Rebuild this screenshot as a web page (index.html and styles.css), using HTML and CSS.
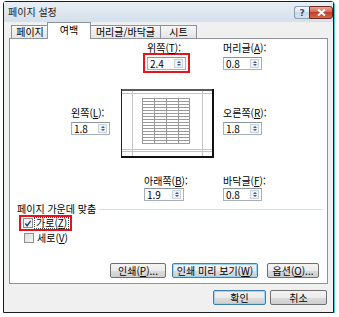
FILE: index.html
```html
<!DOCTYPE html>
<html lang="ko">

<head>
  <meta charset="UTF-8">
  <title>페이지 설정</title>
  <link rel="stylesheet" href="styles.css">
</head>

<body>
  <div class="window">
    <div class="titlebar">
      <span class="title">페이지 설정</span>
      <div class="caption_buttons">
        <span class="cap help">?</span>
        <span class="cap close">
          <svg width="9" height="7" viewBox="0 0 9 7">
            <path d="M1 0.5 L8 6.5 M8 0.5 L1 6.5" stroke="#fff" stroke-width="2" />
          </svg>
        </span>
      </div>
    </div>

    <div class="client">
      <div class="tabs">
        <span class="tab t1">페이지</span>
        <span class="tab t2 active">여백</span>
        <span class="tab t3">머리글/바닥글</span>
        <span class="tab t4">시트</span>
      </div>

      <div class="panel">
        <div class="margins">
          <div class="field f_top">
            <div class="label">위쪽(<u>T</u>):</div>
            <div class="redbox">
              <div class="spin"><span class="val">2.4</span><span class="arrows"><i class="up"></i><i class="down"></i></span></div>
            </div>
          </div>
          <div class="field f_header">
            <div class="label">머리글(<u>A</u>):</div>
            <div class="spin"><span class="val">0.8</span><span class="arrows"><i class="up"></i><i class="down"></i></span></div>
          </div>

          <div class="field f_left">
            <div class="label">왼쪽(<u>L</u>):</div>
            <div class="spin"><span class="val">1.8</span><span class="arrows"><i class="up"></i><i class="down"></i></span></div>
          </div>
          <div class="preview">
            <svg width="93" height="69" viewBox="0 0 93 69">
              <rect x="0" y="0" width="93" height="69" fill="#fff" />
              <g stroke="#c4c4c4" stroke-width="1">
                <line x1="11.5" y1="0" x2="11.5" y2="67" />
                <line x1="81.5" y1="0" x2="81.5" y2="67" />
                <line x1="0" y1="4.5" x2="91" y2="4.5" />
                <line x1="0" y1="60.5" x2="91" y2="60.5" />
                <line x1="0" y1="62.5" x2="91" y2="62.5" />
              </g>
              <g stroke="#9a9a9a" stroke-width="1" fill="none">
                <rect x="21.5" y="9.5" width="47" height="45" />
                <line x1="33.5" y1="9.5" x2="33.5" y2="54.5" />
                <line x1="45.5" y1="9.5" x2="45.5" y2="54.5" />
                <line x1="57.5" y1="9.5" x2="57.5" y2="54.5" />
                <line x1="21.5" y1="12.5" x2="68.5" y2="12.5" />
                <line x1="21.5" y1="15.5" x2="68.5" y2="15.5" />
                <line x1="21.5" y1="18.5" x2="68.5" y2="18.5" />
                <line x1="21.5" y1="21.5" x2="68.5" y2="21.5" />
                <line x1="21.5" y1="24.5" x2="68.5" y2="24.5" />
                <line x1="21.5" y1="27.5" x2="68.5" y2="27.5" />
                <line x1="21.5" y1="30.5" x2="68.5" y2="30.5" />
                <line x1="21.5" y1="33.5" x2="68.5" y2="33.5" />
                <line x1="21.5" y1="36.5" x2="68.5" y2="36.5" />
                <line x1="21.5" y1="39.5" x2="68.5" y2="39.5" />
                <line x1="21.5" y1="42.5" x2="68.5" y2="42.5" />
                <line x1="21.5" y1="45.5" x2="68.5" y2="45.5" />
                <line x1="21.5" y1="48.5" x2="68.5" y2="48.5" />
                <line x1="21.5" y1="51.5" x2="68.5" y2="51.5" />
              </g>
              <rect x="0" y="0" width="93" height="2" fill="#5a5a5a" />
              <rect x="0" y="0" width="1" height="69" fill="#222" />
              <rect x="91" y="0" width="2" height="69" fill="#111" />
              <rect x="0" y="67" width="93" height="2" fill="#111" />
            </svg>
          </div>
          <div class="field f_right">
            <div class="label">오른쪽(<u>R</u>):</div>
            <div class="spin"><span class="val">1.8</span><span class="arrows"><i class="up"></i><i class="down"></i></span></div>
          </div>

          <div class="field f_bottom">
            <div class="label">아래쪽(<u>B</u>):</div>
            <div class="spin"><span class="val">1.9</span><span class="arrows"><i class="up"></i><i class="down"></i></span></div>
          </div>
          <div class="field f_footer">
            <div class="label">바닥글(<u>F</u>):</div>
            <div class="spin"><span class="val">0.8</span><span class="arrows"><i class="up"></i><i class="down"></i></span></div>
          </div>
        </div>

        <div class="group_title">페이지 가운데 맞춤</div>
        <div class="check_row redcheck">
          <span class="checkbox checked">
            <svg width="9" height="9" viewBox="0 0 9 9">
              <path d="M1.5 4.5 L3.5 7 L7.5 1.5" stroke="#1d3f7a" stroke-width="1.6" fill="none" />
            </svg>
          </span>
          <span class="check_label focus">가로(<u>Z</u>)</span>
        </div>
        <div class="check_row plain">
          <span class="checkbox"></span>
          <span class="check_label">세로(<u>V</u>)</span>
        </div>

        <div class="panel_buttons">
          <span class="btn b_print">인쇄(<u>P</u>)...</span>
          <span class="btn b_preview">인쇄 미리 보기(<u>W</u>)</span>
          <span class="btn b_options">옵션(<u>O</u>)...</span>
        </div>
      </div>

      <div class="dialog_buttons">
        <span class="btn default b_ok">확인</span>
        <span class="btn b_cancel">취소</span>
      </div>
    </div>
  </div>
</body>

</html>
```

FILE: styles.css
```css
body {
  margin: 0;
  background-color: #fff;
  font-family: 'Noto Sans CJK KR', 'Liberation Sans', sans-serif;
  font-size: 10px;
  color: #000;
}

u {
  text-decoration: underline;
  text-underline-offset: 1px;
}

.window {
  margin: 1px 0 0 3px;
  width: 331px;
  height: 312px;
  box-sizing: border-box;
  border: 1px solid #1c1c1c;
  border-radius: 3px 3px 0 0;
  background-color: #eef1f4;
  box-shadow: 1px 1px 0 #52c6db;
  display: flex;
  flex-direction: column;
}

.titlebar {
  height: 20px;
  display: flex;
  align-items: center;
  justify-content: space-between;
  background: linear-gradient(#e8eef5, #d5e0eb);
  padding: 0 0 0 4px;
}

.title {
  line-height: 12px;
  color: #1a1a1a;
}

.caption_buttons {
  display: flex;
  align-self: flex-start;
  margin-top: 4px;
}

.cap {
  height: 13px;
  box-sizing: border-box;
  display: flex;
  justify-content: center;
  align-items: center;
}

.help {
  width: 15px;
  border: 1px solid #8a9db3;
  border-right: none;
  border-radius: 3px 0 0 3px;
  background: linear-gradient(#f3f7fb, #dce6f0 50%, #cbd9e6 50%, #d6e3ef);
  color: #3d4f66;
  font-family: 'DejaVu Sans', sans-serif;
  font-size: 9px;
  font-weight: bold;
  line-height: 10px;
}

.close {
  width: 24px;
  border: 1px solid #6e2a20;
  border-radius: 0 3px 3px 0;
  background: linear-gradient(#eaa596, #d2614b 50%, #c0412b 50%, #cf6a4e);
}

.client {
  flex: 1;
  display: flex;
  flex-direction: column;
  background-color: #f0f0f0;
  padding: 0 5px 0 5px;
}

.tabs {
  height: 16px;
  display: flex;
  align-items: flex-end;
  padding-left: 2px;
}

.tab {
  height: 13px;
  box-sizing: border-box;
  border: 1px solid #8d929b;
  border-bottom: none;
  background: linear-gradient(#f6f6f6, #e4e4e4);
  line-height: 11px;
  text-align: center;
  margin-right: -1px;
}

.t1 {
  width: 38px;
}

.t2 {
  width: 44px;
}

.t3 {
  width: 71px;
}

.t4 {
  width: 37px;
}

.tab.active {
  height: 17px;
  margin-bottom: -1px;
  margin-left: -1px;
  margin-right: -1px;
  background: #fff;
  position: relative;
  z-index: 1;
  line-height: 13px;
}

.panel {
  height: 246px;
  box-sizing: border-box;
  border: 1px solid #8d929b;
  background-color: #fff;
  display: flex;
  flex-direction: column;
}

.margins {
  display: grid;
  grid-template-columns: 61px 49px 103px 1fr;
  padding-top: 3px;
}

.label {
  line-height: 12px;
  height: 12px;
  white-space: nowrap;
}

.spin {
  width: 39px;
  height: 13px;
  box-sizing: border-box;
  border: 1px solid #a9b0b8;
  border-top-color: #8c949c;
  background-color: #fff;
  display: flex;
  justify-content: space-between;
  align-items: center;
}

.val {
  padding-left: 2px;
  line-height: 11px;
}

.arrows {
  width: 9px;
  height: 9px;
  margin-right: 2px;
  box-sizing: border-box;
  border: 1px solid #c9d3de;
  background-color: #eef2f7;
  display: flex;
  flex-direction: column;
  justify-content: space-around;
  align-items: center;
}

.arrows i {
  width: 0;
  height: 0;
  border-left: 2px solid transparent;
  border-right: 2px solid transparent;
}

.arrows .up {
  border-bottom: 2px solid #3e5a86;
}

.arrows .down {
  border-top: 2px solid #3e5a86;
}

.f_top {
  grid-column: 3;
  grid-row: 1;
  margin-left: 23px;
}

.f_top .label {
  margin-left: 4px;
}

.redbox {
  width: 47px;
  box-sizing: border-box;
  border: 2px solid #e3141c;
  padding: 2px 2px 1px 2px;
  margin-top: -1px;
}

.f_header {
  grid-column: 4;
  grid-row: 1;
}

.f_header .spin,
.f_left .spin,
.f_right .spin {
  margin-top: 3px;
}

.f_left {
  grid-column: 2;
  grid-row: 2;
  margin-top: 34px;
}

.preview {
  grid-column: 3;
  grid-row: 2;
  margin-top: 16px;
  margin-left: 1px;
  height: 69px;
}

.preview svg {
  display: block;
}

.f_right {
  grid-column: 4;
  grid-row: 2;
  margin-top: 34px;
}

.f_bottom {
  grid-column: 3;
  grid-row: 3;
  margin-top: 17px;
  margin-left: 24px;
}

.f_bottom .spin {
  width: 40px;
}

.f_bottom .spin,
.f_footer .spin {
  margin-top: 1px;
}

.f_footer {
  grid-column: 4;
  grid-row: 3;
  margin-top: 17px;
}

.group_title {
  margin: 2px 4px 0 7px;
  line-height: 12px;
  display: flex;
  align-items: center;
  white-space: nowrap;
}

.group_title::after {
  content: "";
  flex: 1;
  height: 1px;
  margin-left: 3px;
  background-color: #d5dfe7;
}

.check_row {
  display: flex;
  align-items: center;
}

.redcheck {
  width: 53px;
  height: 16px;
  box-sizing: border-box;
  margin-left: 9px;
  border: 2px solid #e3141c;
  padding-left: 2px;
}

.plain {
  margin-left: 14px;
  height: 12px;
  margin-top: 1px;
}

.checkbox {
  width: 10px;
  height: 10px;
  box-sizing: border-box;
  border: 1px solid #8e8f8f;
  background: linear-gradient(135deg, #dcdcdc, #f6f6f6);
  display: flex;
  justify-content: center;
  align-items: center;
}

.checkbox.checked {
  background: #f4f4f4;
}

.check_label {
  margin-left: 2px;
  line-height: 10px;
  padding: 0 1px;
}

.check_label.focus {
  outline: 1px dotted #444;
}

.panel_buttons {
  display: flex;
  justify-content: flex-end;
  margin-top: 19px;
  padding-right: 8px;
}

.btn {
  height: 15px;
  box-sizing: border-box;
  border: 1px solid #707070;
  border-radius: 2px;
  background: linear-gradient(#f3f3f3, #ebebeb 50%, #dddddd 50%, #cfcfcf);
  display: flex;
  justify-content: center;
  align-items: center;
  line-height: 12px;
  white-space: nowrap;
}

.b_print {
  width: 56px;
}

.b_preview {
  width: 86px;
  margin-left: 6px;
  border-color: #3c7fb1;
  box-shadow: inset 0 0 0 1px #9fd4ef;
}

.b_options {
  width: 52px;
  margin-left: 9px;
}

.dialog_buttons {
  display: flex;
  justify-content: flex-end;
  margin-top: 6px;
  padding-right: 1px;
}

.btn.default {
  border-color: #3c7fb1;
  box-shadow: inset 0 0 0 1px #9fd4ef;
}

.b_ok {
  width: 53px;
  height: 15px;
}

.b_cancel {
  width: 57px;
  margin-left: 4px;
}
```
